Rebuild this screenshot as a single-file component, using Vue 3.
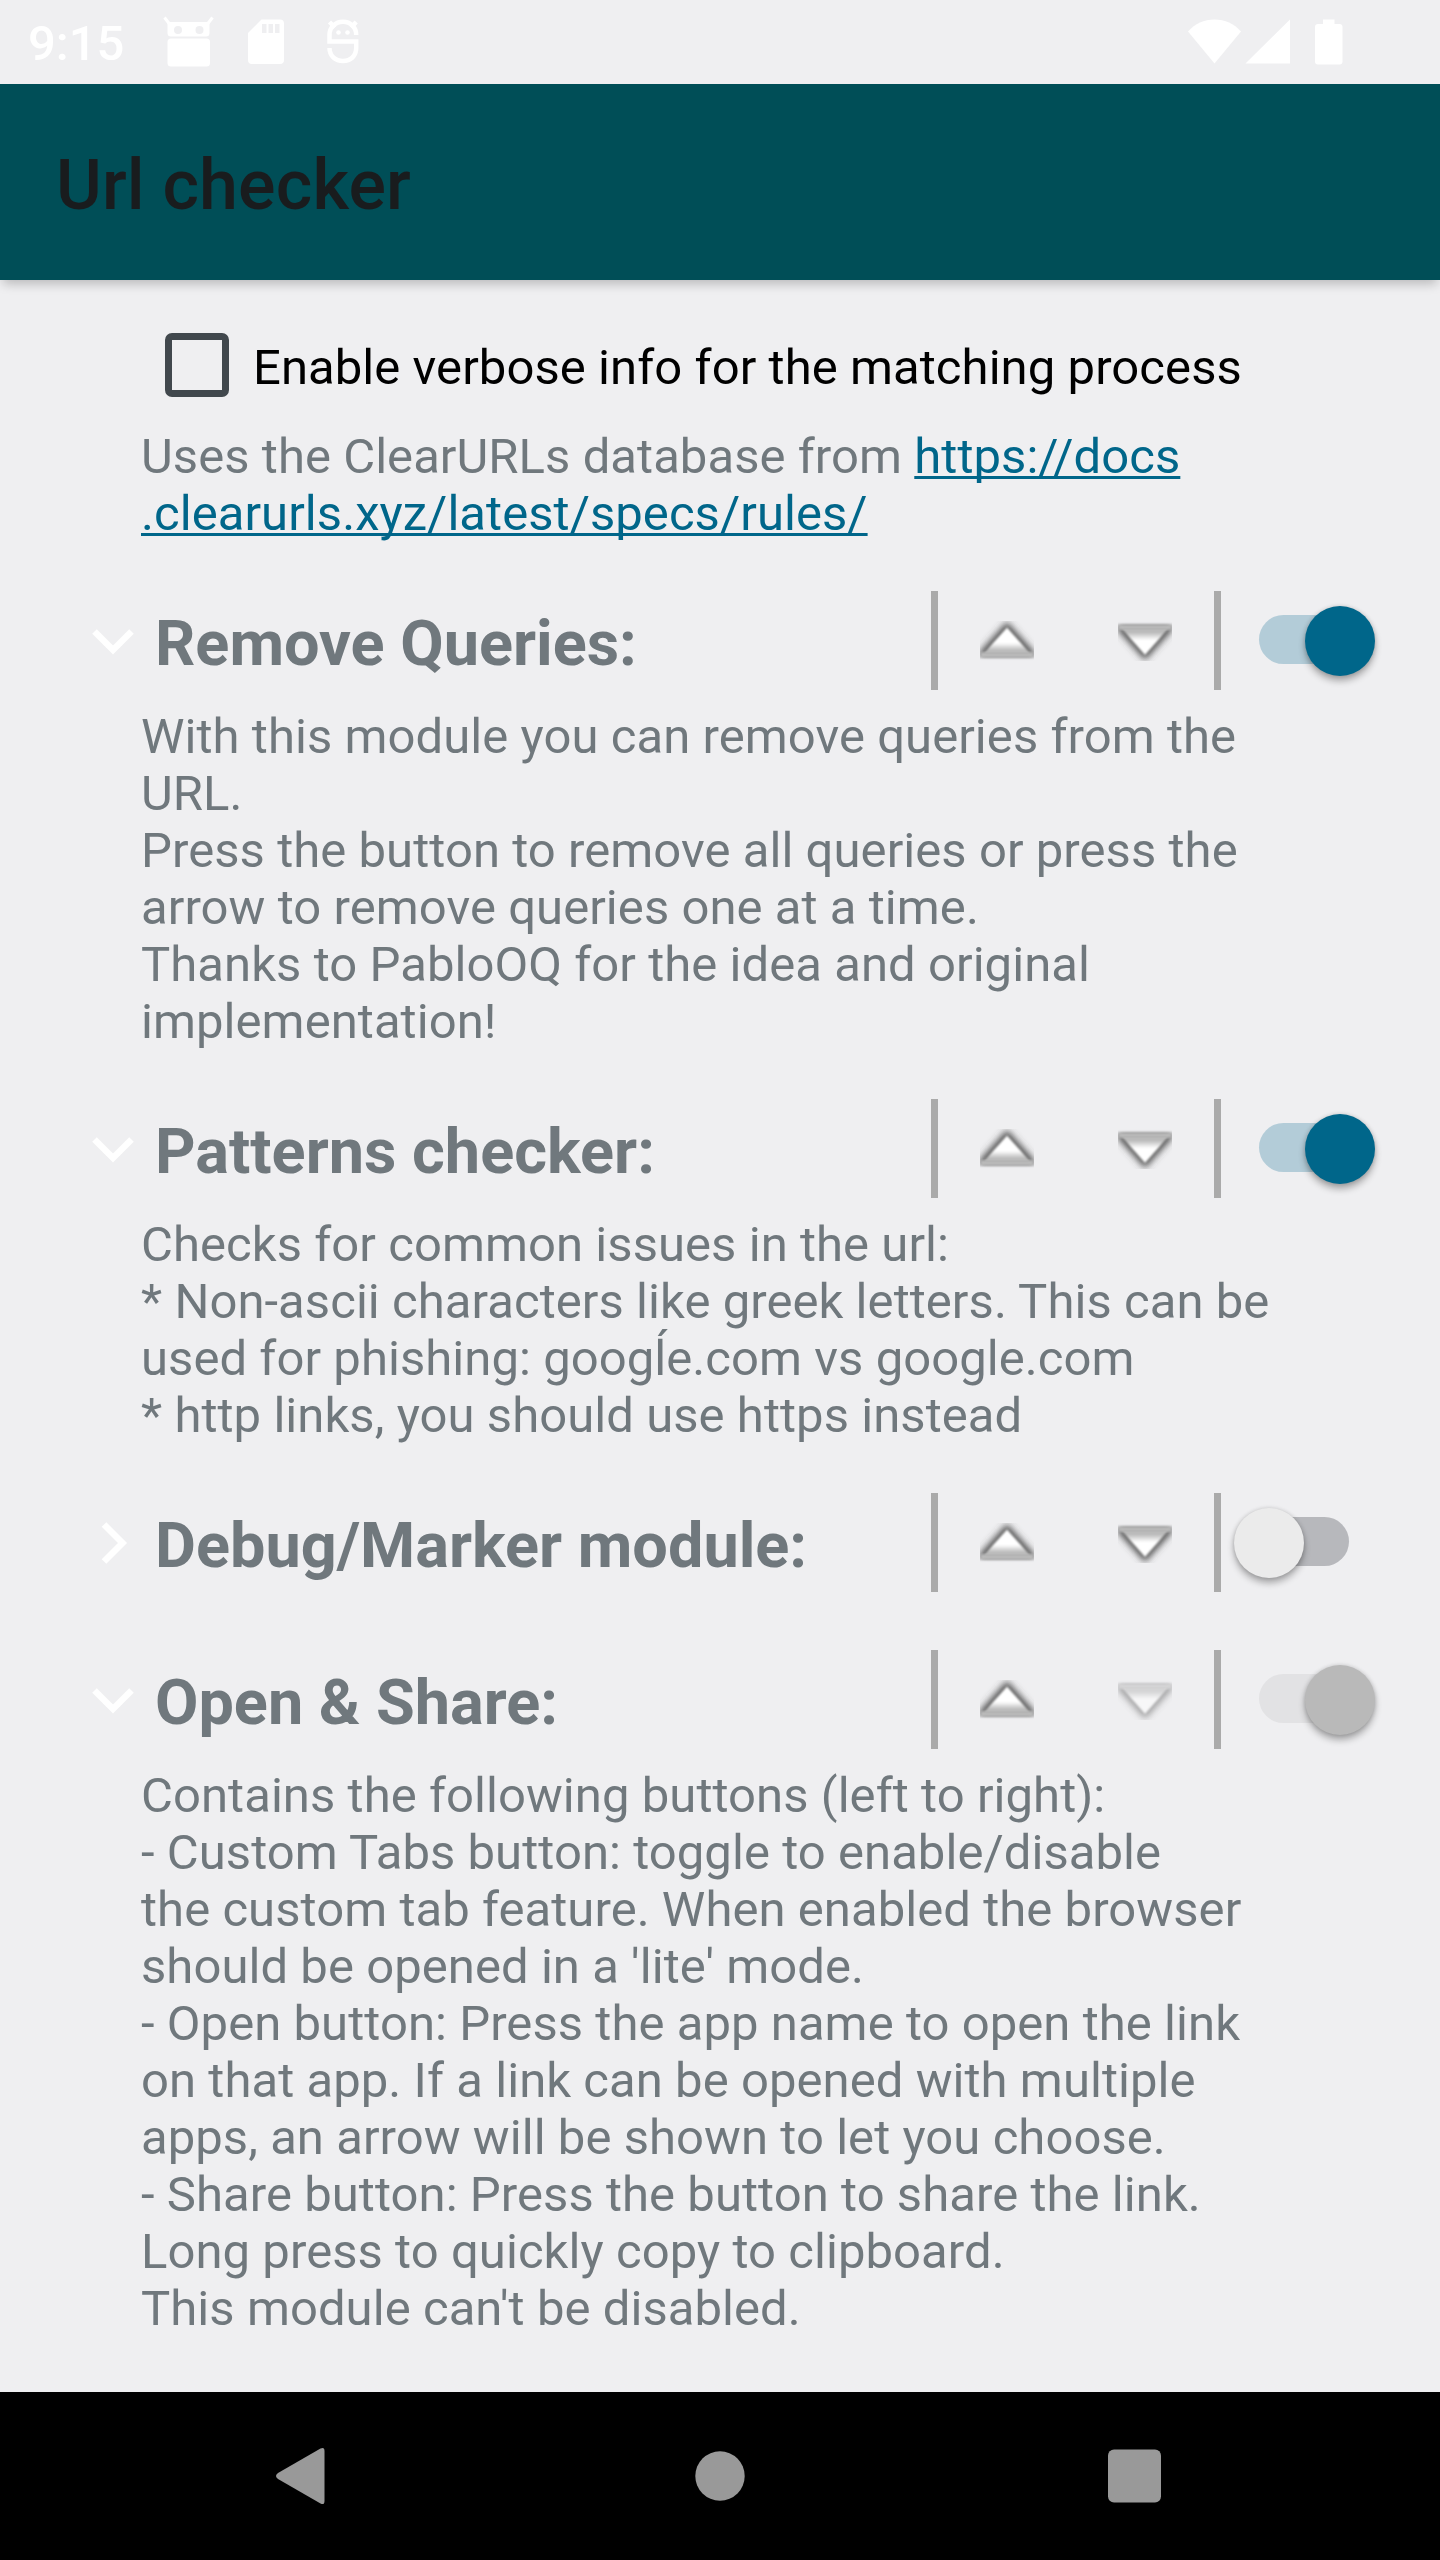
<script setup>
const modules = [
  {
    title: 'Remove Queries:', open: true, down: true, state: 'on',
    lines: [
      'With this module you can remove queries from the',
      'URL.',
      'Press the button to remove all queries or press the',
      'arrow to remove queries one at a time.',
      'Thanks to PabloOQ for the idea and original',
      'implementation!',
    ],
  },
  {
    title: 'Patterns checker:', open: true, down: true, state: 'on',
    lines: [
      'Checks for common issues in the url:',
      '* Non-ascii characters like greek letters. This can be',
      'used for phishing: googĺe.com vs google.com',
      '* http links, you should use https instead',
    ],
  },
  { title: 'Debug/Marker module:', open: false, down: true, state: 'off', lines: [] },
  {
    title: 'Open & Share:', open: true, down: false, state: 'locked',
    lines: [
      'Contains the following buttons (left to right):',
      '- Custom Tabs button: toggle to enable/disable',
      'the custom tab feature. When enabled the browser',
      "should be opened in a 'lite' mode.",
      '- Open button: Press the app name to open the link',
      'on that app. If a link can be opened with multiple',
      'apps, an arrow will be shown to let you choose.',
      '- Share button: Press the button to share the link.',
      'Long press to quickly copy to clipboard.',
      "This module can't be disabled.",
    ],
  },
]
</script>

<template>
  <div class="screen">
    <svg class="defs" width="0" height="0" aria-hidden="true">
      <defs>
        <linearGradient id="arrowUp" x1="0" y1="0" x2="0" y2="1">
          <stop offset="0.58" stop-color="#fff" />
          <stop offset="0.86" stop-color="#bababa" />
        </linearGradient>
        <linearGradient id="arrowDown" x1="0" y1="0" x2="0" y2="1">
          <stop offset="0.16" stop-color="#bababa" />
          <stop offset="0.45" stop-color="#fff" />
        </linearGradient>
        <filter id="soft" x="-30%" y="-40%" width="160%" height="180%">
          <feGaussianBlur stdDeviation="3.6" />
        </filter>
        <filter id="edge" x="-10%" y="-30%" width="120%" height="160%">
          <feGaussianBlur stdDeviation="0.9" />
        </filter>
      </defs>
    </svg>

    <header class="status">
      <div class="status-left">
        <span class="clock">9:15</span>
        <svg class="ic-robot" width="52" height="52" viewBox="0 0 52 52">
          <path d="M1.5 1.500 L6.500 8" stroke="#fff" stroke-width="3" />
          <path d="M49.500 1.500 L44.500 8" stroke="#fff" stroke-width="3" />
          <path fill="#fff" fill-rule="evenodd" d="M4.500 6h42v11a3.500 3.500 0 0 1-3.500 3.500H8a3.500 3.500 0 0 1-3.500-3.500zM15 10a4 4 0 1 0 0 8 4 4 0 0 0 0-8zM36.500 10a4 4 0 1 0 0 8 4 4 0 0 0 0-8z" />
          <rect x="4.500" y="22.500" width="42.500" height="28" rx="3.500" fill="#fff" />
        </svg>
        <svg class="ic-sd" width="36" height="45" viewBox="0 0 36 45">
          <path fill="#fff" fill-rule="evenodd" d="M13.500 0.500H32a4 4 0 0 1 4 4V41a4 4 0 0 1-4 4H4a4 4 0 0 1-4-4V14zM14 5v9h4.500V5zM20.500 5v9H25V5zM27 5v9h4.500V5z" />
        </svg>
        <svg class="ic-bug" width="32" height="45" viewBox="0 0 32 45">
          <g fill="none" stroke="#fff" stroke-width="4.500">
            <path d="M29.200 16C29.200 8 23.500 2.700 16 2.700S2.500 8 2.500 16V22.500H29.200V29C29.200 37 23.500 42 16 42S2.500 37 2.500 29" />
            <path d="M2.500 3L8 8.500M29.200 3L24 8.500" />
          </g>
          <circle cx="11.500" cy="13.500" r="2.300" fill="#fff" />
          <circle cx="20.500" cy="13.500" r="2.300" fill="#fff" />
        </svg>
      </div>
      <svg class="status-right" width="154" height="46" viewBox="0 0 154 46">
        <g fill="#fff">
          <path d="M0 12.500C7 4.500 16 0.500 26.500 0.500S46 4.500 53 12.500L26.500 44.500z" />
          <path d="M57.500 44.500L102 0.500V44.500z" />
          <path d="M135 0.500h11.500v4.500h5a3 3 0 0 1 3 3V42.500a3 3 0 0 1-3 3h-21.500a3 3 0 0 1-3-3V8a3 3 0 0 1 3-3h5z" />
        </g>
      </svg>
    </header>

    <div class="appbar"><h1>Url checker</h1></div>

    <main class="content">
      <label class="check">
        <span class="box"></span>
        <span class="check-text">Enable verbose info for the matching process</span>
      </label>
      <p class="desc intro">Uses the ClearURLs database from <a>https://docs<br>.clearurls.xyz/latest/specs/rules/</a></p>

      <section v-for="m in modules" :key="m.title" class="module" :class="{ collapsed: !m.open }">
        <div class="head">
          <svg class="chevron" width="56" height="56" viewBox="0 0 56 56">
            <path :d="m.open ? 'M9.500 18.500L28 37L46.500 18.500' : 'M19 9.500L37.500 28L19 46.500'" fill="none" stroke="#fff" stroke-width="6.500" />
          </svg>
          <h2>{{ m.title }}</h2>
          <div class="moves">
            <svg width="54" height="40" viewBox="0 0 54 40">
              <path d="M27 1L54 31V36H0V31z" fill="#4a4a4a" filter="url(#soft)" />
              <path d="M-3 37.500H57V44H-3z" fill="#efeff1" filter="url(#edge)" />
              <path d="M1 31.500H53V36.500H1z" fill="#bababa" filter="url(#edge)" />
              <path d="M27 6.500L51 33H3z" fill="url(#arrowUp)" filter="url(#edge)" />
            </svg>
            <svg width="54" height="40" viewBox="0 0 54 40" :class="{ faded: !m.down }">
              <path d="M27 39L54 9V4H0V9z" fill="#4a4a4a" filter="url(#soft)" />
              <path d="M-3 -4H57V2.500H-3z" fill="#efeff1" filter="url(#edge)" />
              <path d="M1 4H53V8.500H1z" fill="#bababa" filter="url(#edge)" />
              <path d="M27 34L51 7H3z" fill="url(#arrowDown)" filter="url(#edge)" />
            </svg>
          </div>
          <div class="switch" :class="m.state"><span class="track"></span><span class="thumb"></span></div>
        </div>
        <p v-if="m.open" class="desc"><template v-for="(l, i) in m.lines" :key="i">{{ l }}<br></template></p>
      </section>
    </main>

    <nav class="nav">
      <svg width="50" height="58" viewBox="0 0 50 58"><path d="M44.500 1.500Q48.500-.5 48.500 4V54Q48.500 58.500 44.500 56.500L2 32Q-2 29 2 26z" fill="#999" /></svg>
      <svg class="home" width="50" height="50" viewBox="0 0 50 50"><circle cx="25" cy="25" r="24.700" fill="#999" /></svg>
      <svg width="53" height="54" viewBox="0 0 53 54"><rect y=".5" width="53" height="53" rx="6" fill="#999" /></svg>
    </nav>
  </div>
</template>

<style>
body { margin: 0; background: #efeff1; }
</style>

<style scoped>
.screen { width: 1440px; height: 2560px; display: flex; flex-direction: column; background: #efeff1; font-family: Roboto, "Noto Sans", sans-serif; overflow: hidden; }
.defs { position: absolute; }
.status { flex: none; height: 84px; display: flex; justify-content: space-between; }
.status-left { display: flex; align-items: flex-start; }
.clock { margin: 15px 0 0 28px; width: 98px; font-size: 49px; line-height: 57px; font-weight: 500; color: #fff; }
.ic-robot { margin: 16px 0 0 37px; }
.ic-sd { margin: 19px 0 0 33px; }
.ic-bug { margin: 19px 0 0 43px; }
.status-right { margin: 19px 98px 0 0; overflow: visible; }
.appbar { flex: none; height: 196px; display: flex; align-items: center; padding-left: 56px; background: #004e57; box-shadow: 0 7px 10px -3px rgba(0, 0, 0, .22); }
h1 { margin: 6px 0 0; font-size: 70px; line-height: 82px; font-weight: 500; letter-spacing: .15px; color: #191c1e; white-space: nowrap; }
.content { flex: 1; min-height: 0; padding-top: 53px; }
.check { display: flex; align-items: center; height: 64px; padding-left: 165px; }
.box { box-sizing: border-box; width: 64px; height: 64px; border: 7px solid #41484d; border-radius: 7px; }
.check-text { margin: 5px 0 0 24px; font-size: 49px; line-height: 57px; letter-spacing: .07px; color: #000; white-space: nowrap; }
.desc { margin: 18px 0 0 141px; font-size: 49px; line-height: 57px; letter-spacing: .06px; color: #70787d; white-space: nowrap; }
.desc.intro { margin: 31px 0 49px 141px; height: 114px; }
a { color: #00668a; text-decoration: underline; text-decoration-thickness: 3px; text-underline-offset: 3px; text-decoration-skip-ink: none; }
.module { margin-bottom: 49px; }
.module.collapsed { margin-bottom: 58px; }
.head { display: flex; align-items: center; height: 99px; padding-left: 85px; }
.chevron { flex: none; }
h2 { flex: none; width: 776px; margin: 6px 0 0 14px; font-size: 63px; line-height: 74px; font-weight: 700; color: #70787d; white-space: nowrap; }
.moves { box-sizing: border-box; flex: none; width: 290px; height: 99px; display: flex; align-items: center; justify-content: space-between; padding: 0 42px; border: solid #aaa; border-width: 0 7px; }
.faded { opacity: .5; }
.switch { display: flex; align-items: center; margin: -3px 0 0 24px; width: 154px; }
.track { flex: none; width: 104px; height: 49px; border-radius: 25px; background: #b3ccd8; margin-left: 14px; }
.thumb { flex: none; width: 70px; height: 70px; border-radius: 50%; margin: 3px 0 0 -58px; background: #00668a; box-shadow: 0 5px 7px rgba(0, 0, 0, .3), 0 0 4px rgba(0, 0, 0, .15); }
.off { flex-direction: row-reverse; width: 118px; margin-left: 13px; justify-content: flex-end; }
.off .track { margin-left: -59px; background: #b7b8bc; }
.off .thumb { margin-left: 0; background: #ebebeb; z-index: 1; }
.locked .track { background: #e2e2e4; }
.locked .thumb { background: #b9b9b9; }
.nav { flex: none; height: 168px; box-sizing: border-box; display: flex; align-items: center; justify-content: space-between; padding: 0 279px 0 276px; background: #000; }
.home { margin-left: 6px; }
</style>
